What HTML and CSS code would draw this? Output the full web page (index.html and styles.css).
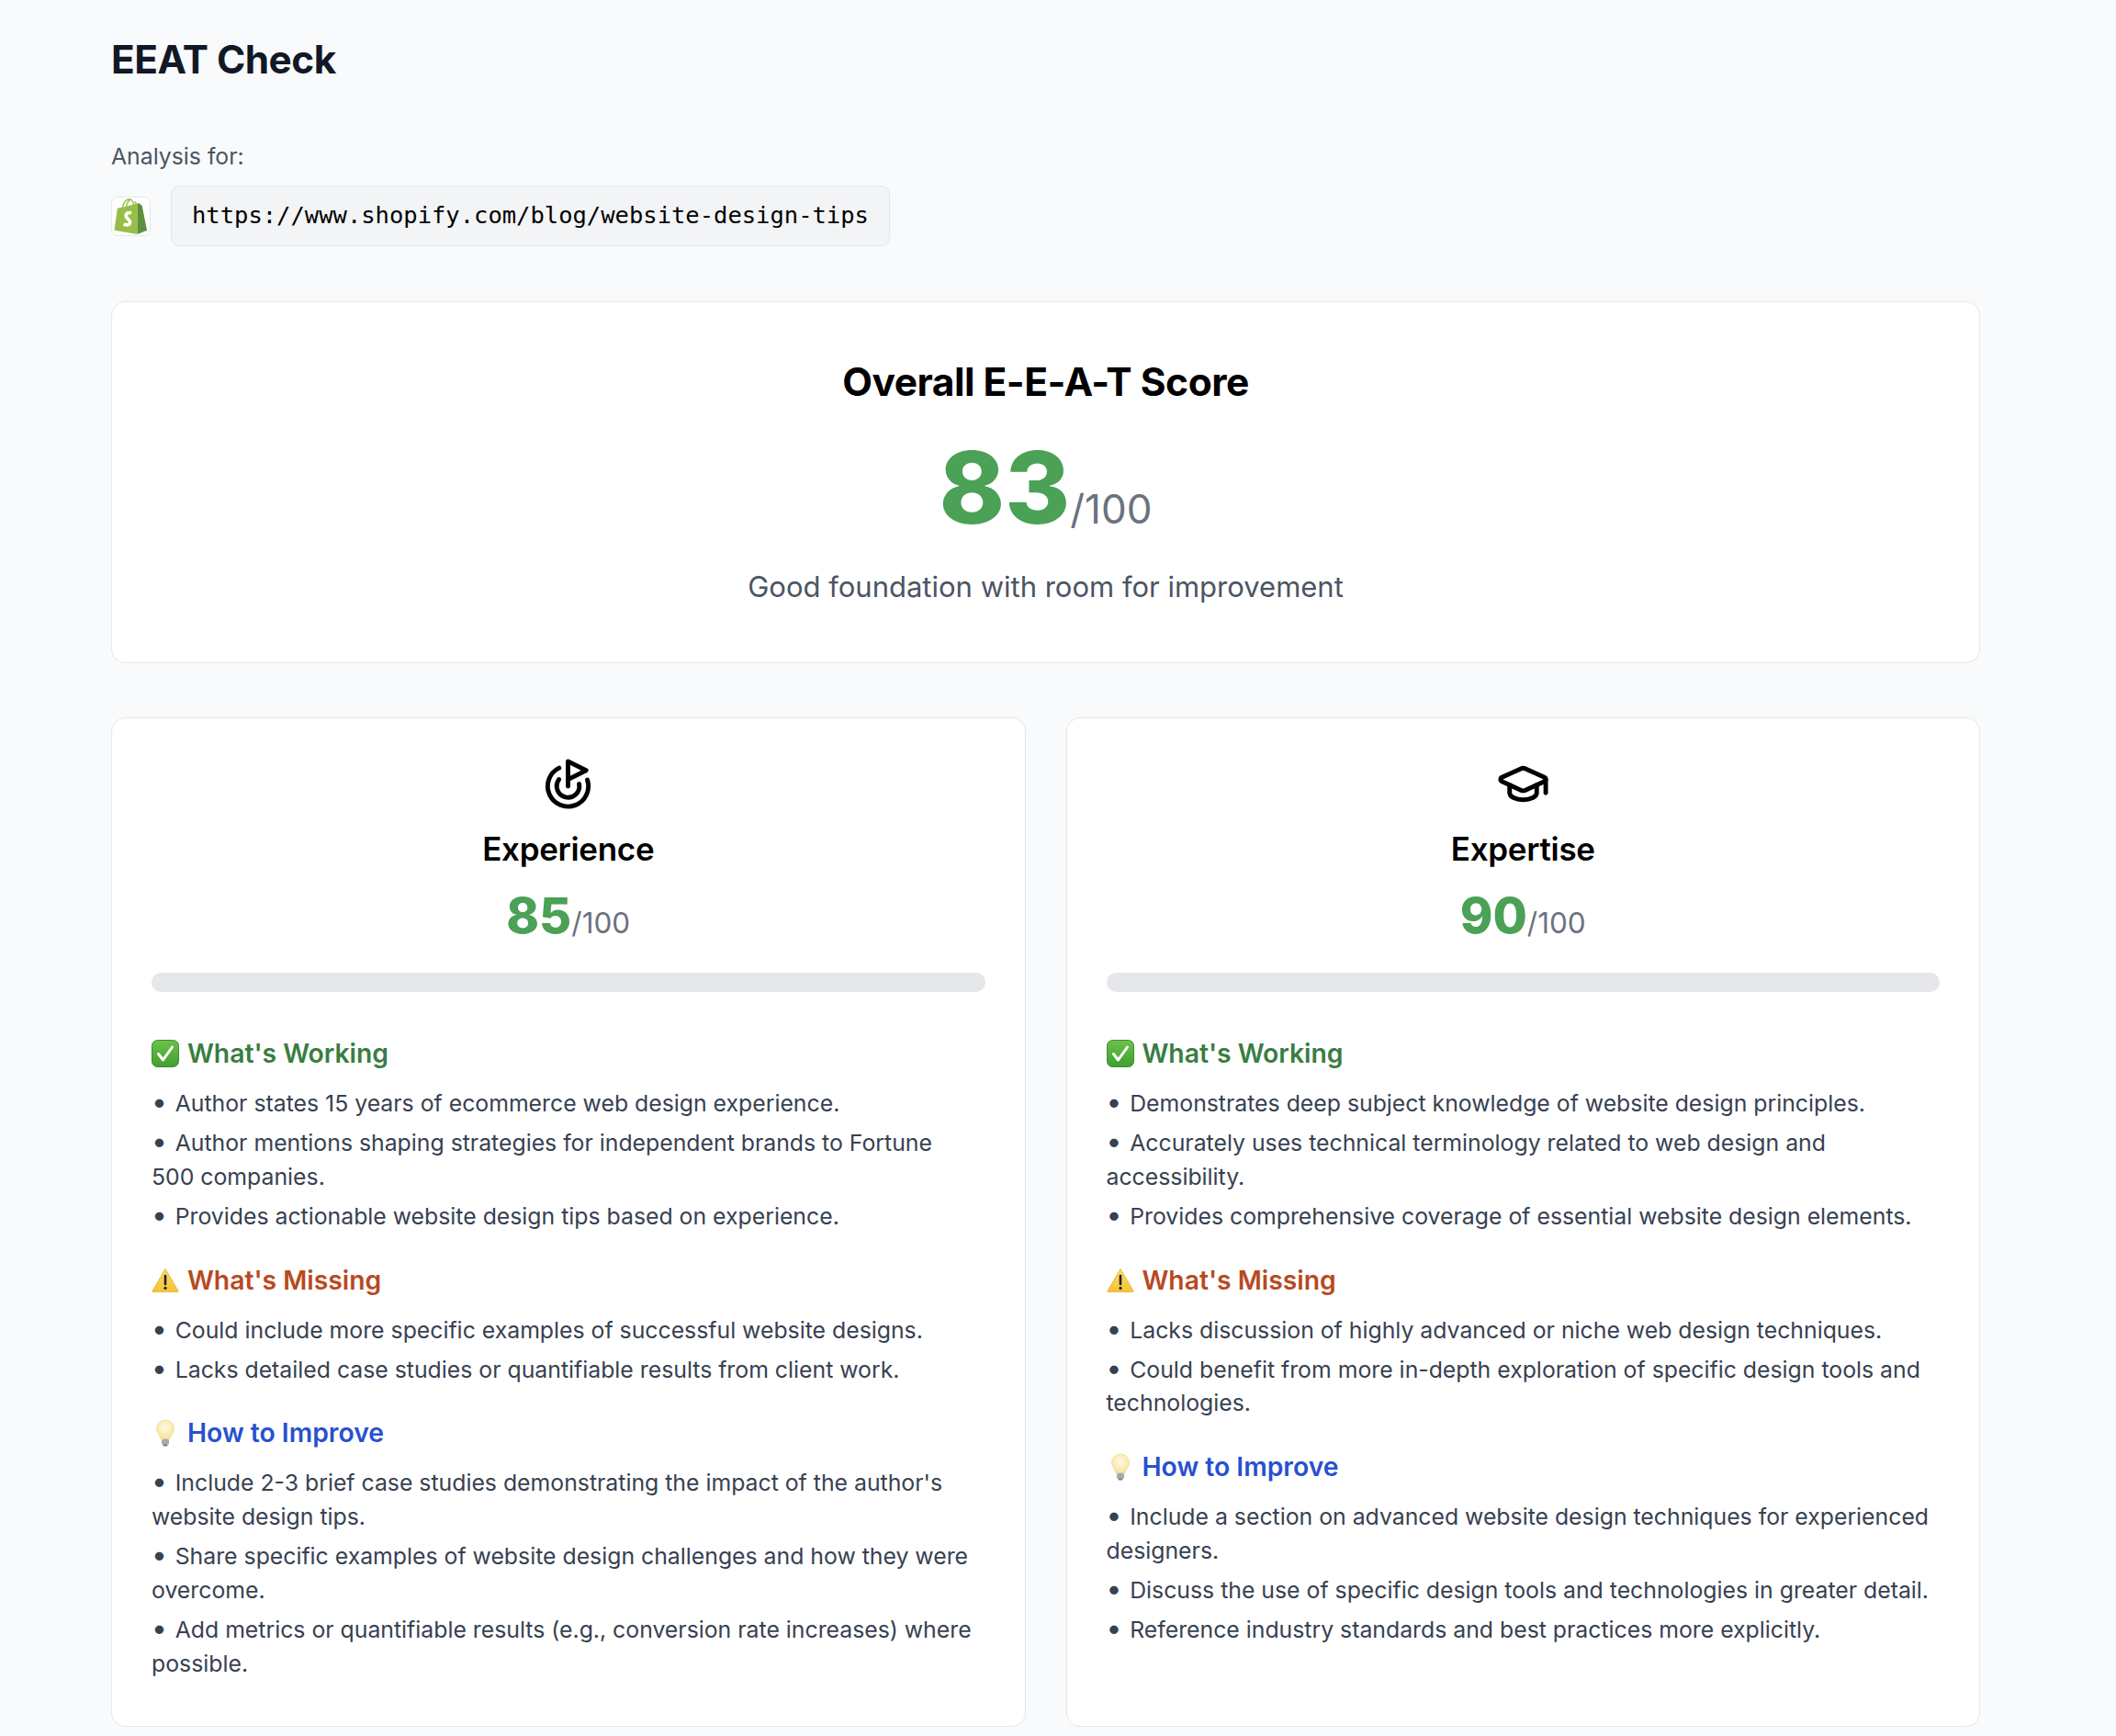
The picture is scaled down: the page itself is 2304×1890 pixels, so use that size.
FILE: index.html
```html
<!DOCTYPE html>
<html lang="en">
<head>
<meta charset="utf-8">
<title>EEAT Check</title>
<link rel="stylesheet" href="styles.css">
</head>
<body>
<svg class="defs" width="0" height="0" aria-hidden="true">
  <defs>
    <linearGradient id="gCheck" x1="0" y1="0" x2="0" y2="1"><stop offset="0" stop-color="#6cc24a"/><stop offset="1" stop-color="#3f9f2f"/></linearGradient>
    <linearGradient id="gWarn" x1="0" y1="0" x2="0" y2="1"><stop offset="0" stop-color="#f9dc6b"/><stop offset="1" stop-color="#f6c238"/></linearGradient>
    <radialGradient id="gBulb" cx="0.5" cy="0.4" r="0.6"><stop offset="0" stop-color="#fffbe0"/><stop offset="1" stop-color="#f8e3a0"/></radialGradient>
    <symbol id="e-check" viewBox="0 0 30 30">
      <rect x="0.5" y="0.5" width="29" height="29" rx="6" fill="url(#gCheck)" stroke="#3c8f2e"/>
      <path d="M7.5 15.5l5 6.5 10-14" fill="none" stroke="#fff" stroke-width="3" stroke-linecap="round" stroke-linejoin="round"/>
    </symbol>
    <symbol id="e-warn" viewBox="0 0 30 30">
      <path d="M15 2.5L29 26.5a.6.6 0 0 1-.5.9H1.5a.6.6 0 0 1-.5-.9z" fill="url(#gWarn)" stroke="#eeb92f" stroke-linejoin="round"/>
      <path d="M15 10v9" stroke="#222" stroke-width="2.6" stroke-linecap="round"/>
      <circle cx="15" cy="23.4" r="1.6" fill="#222"/>
    </symbol>
    <symbol id="e-bulb" viewBox="0 0 30 30">
      <path d="M15 1a9.5 9.5 0 0 0-9.5 9.5c0 3.6 2.3 5.6 3.6 8 .5 1 .6 2 .6 3h10.6c0-1 .1-2 .6-3 1.3-2.4 3.6-4.4 3.6-8A9.500 9.500 0 0 0 15 1z" fill="url(#gBulb)" stroke="#f0d890" stroke-width=".8"/>
      <rect x="11" y="21.800" width="8" height="6" rx="1.500" fill="#a9a9a9"/>
      <rect x="12.500" y="27.500" width="5" height="2" rx="1" fill="#777"/>
    </symbol>
  </defs>
</svg>
<main class="page">
  <h1 class="page-title">EEAT Check</h1>
  <p class="analysis-label">Analysis for:</p>
  <div class="url-row">
    <span class="favicon">
      <svg viewBox="0 0 42 42" width="41" height="41">
        <path d="M6 12L2.500 36.500 28.500 41 28.500 6.500 24 8z" fill="#95bf47"/>
        <path d="M28.500 6.500L31 7 33.500 9.500 39 36.500 28.500 41z" fill="#5e8e3e"/>
        <path d="M12 11c.5-5 3.500-9 7-9 3.500 0 5 3.500 5 6.500M16 10c.5-3.500 2-6 4-7M25 4.500c1.500.8 2 2.500 2.200 4" fill="none" stroke="#95bf47" stroke-width="1.500"/>
        <path d="M21.500 17.500c-1.500-.8-5.500-1-6 2.500-.5 3.500 5 4.500 4.500 8-.4 3-3.500 3.200-7 1.500" fill="none" stroke="#fff" stroke-width="3.800"/>
      </svg>
    </span>
    <code class="url-box">https://www.shopify.com/blog/website-design-tips</code>
  </div>

  <section class="card hero">
    <h2 class="hero-title">Overall E-E-A-T Score</h2>
    <div class="hero-score"><span class="hero-num">83</span><span class="hero-max">/100</span></div>
    <p class="hero-sub">Good foundation with room for improvement</p>
  </section>

  <div class="columns">
    <article class="card pillar">
      <svg class="pillar-icon" viewBox="0 0 24 24"><path d="M12 13V2l8 4-8 4"/><path d="M20.561 10.222a9 9 0 1 1-12.55-5.29"/><path d="M8.002 9.997a5 5 0 1 0 8.9 2.02"/></svg>
      <h3 class="pillar-title">Experience</h3>
      <div class="pillar-score"><span class="pillar-num">85</span><span class="pillar-max">/100</span></div>
      <div class="bar"></div>
      <h4 class="sec good"><svg class="emoji"><use href="#e-check"/></svg>What's Working</h4>
      <ul class="items">
        <li>Author states 15 years of ecommerce web design experience.</li>
        <li>Author mentions shaping strategies for independent brands to Fortune 500&nbsp;companies.</li>
        <li>Provides actionable website design tips based on experience.</li>
      </ul>
      <h4 class="sec warn"><svg class="emoji"><use href="#e-warn"/></svg>What's Missing</h4>
      <ul class="items">
        <li>Could include more specific examples of successful website designs.</li>
        <li>Lacks detailed case studies or quantifiable results from client work.</li>
      </ul>
      <h4 class="sec tip"><svg class="emoji"><use href="#e-bulb"/></svg>How to Improve</h4>
      <ul class="items">
        <li>Include 2-3 brief case studies demonstrating the impact of the author's website design tips.</li>
        <li>Share specific examples of website design challenges and how they were overcome.</li>
        <li>Add metrics or quantifiable results (e.g., conversion rate increases) where possible.</li>
      </ul>
    </article>
    <article class="card pillar">
      <svg class="pillar-icon" viewBox="0 0 24 24"><path d="M21.42 10.922a1 1 0 0 0-.019-1.838L12.83 5.18a2 2 0 0 0-1.66 0L2.6 9.08a1 1 0 0 0 0 1.832l8.57 3.908a2 2 0 0 0 1.66 0z"/><path d="M22 10v6"/><path d="M6 12.5V16a6 3 0 0 0 12 0v-3.5"/></svg>
      <h3 class="pillar-title">Expertise</h3>
      <div class="pillar-score"><span class="pillar-num">90</span><span class="pillar-max">/100</span></div>
      <div class="bar"></div>
      <h4 class="sec good"><svg class="emoji"><use href="#e-check"/></svg>What's Working</h4>
      <ul class="items">
        <li>Demonstrates deep subject knowledge of website design principles.</li>
        <li>Accurately uses technical terminology related to web design and accessibility.</li>
        <li>Provides comprehensive coverage of essential website design elements.</li>
      </ul>
      <h4 class="sec warn"><svg class="emoji"><use href="#e-warn"/></svg>What's Missing</h4>
      <ul class="items">
        <li>Lacks discussion of highly advanced or niche web design techniques.</li>
        <li>Could benefit from more in-depth exploration of specific design tools and technologies.</li>
      </ul>
      <h4 class="sec tip"><svg class="emoji"><use href="#e-bulb"/></svg>How to Improve</h4>
      <ul class="items">
        <li>Include a section on advanced website design techniques for experienced designers.</li>
        <li>Discuss the use of specific design tools and technologies in greater detail.</li>
        <li>Reference industry standards and best practices more explicitly.</li>
      </ul>
    </article>
  </div>
</main>
</body>
</html>
```

FILE: styles.css
```css
* { box-sizing: border-box; }
html, body { margin: 0; padding: 0; }
body {
  background: #f9fafb;
  font-family: Inter, "Liberation Sans", sans-serif;
  color: #374151;
  height: 1890px;
  overflow: hidden;
}
.defs { position: absolute; }
.page { padding: 41px 148px 0 121px; }
.page-title {
  margin: 0;
  font-size: 42.3px;
  line-height: 48px;
  font-weight: 700;
  color: #111827;
  letter-spacing: -0.5px;
}
.analysis-label {
  margin: 64px 0 0;
  font-size: 24.8px;
  line-height: 35px;
  color: #4b5563;
}
.url-row {
  display: flex;
  align-items: center;
  gap: 22px;
  margin-top: 14px;
}
.favicon {
  width: 43px;
  height: 43px;
  flex: none;
  display: flex;
  align-items: center;
  justify-content: center;
  background: #fff;
  border: 1px solid #e5e7eb;
  border-radius: 7px;
}
.url-box {
  display: block;
  height: 66px;
  padding: 0 22px;
  line-height: 63px;
  font-family: "DejaVu Sans Mono", monospace;
  font-size: 25.5px;
  color: #000;
  background: #f3f4f6;
  border: 1px solid #e5e7eb;
  border-radius: 9px;
}
.card {
  background: #fff;
  border: 1px solid #e5e7eb;
  border-radius: 15px;
}
.hero {
  height: 394px;
  margin-top: 60px;
  padding-top: 58px;
  text-align: center;
}
.hero-title {
  margin: 0;
  font-size: 42.5px;
  line-height: 58px;
  font-weight: 700;
  color: #000;
  letter-spacing: -0.5px;
}
.hero-score { margin-top: 26px; line-height: 120px; height: 120px; }
.hero-num { font-size: 108px; font-weight: 800; color: #4ba155; }
.hero-max { font-size: 44px; color: #6b7280; }
.hero-sub {
  margin: 26px 0 0;
  font-size: 31px;
  line-height: 44px;
  color: #4b5563;
}
.columns {
  display: grid;
  grid-template-columns: 1fr 1fr;
  gap: 44px;
  margin-top: 59px;
}
.pillar { height: 1099px; padding: 42px 43px 0; }
.pillar-icon {
  display: block;
  width: 59px;
  height: 59px;
  margin: 0 auto;
  fill: none;
  stroke: #000;
  stroke-width: 2;
  stroke-linecap: round;
  stroke-linejoin: round;
}
.pillar-title {
  margin: 18px 0 0;
  font-size: 35px;
  line-height: 47px;
  font-weight: 600;
  color: #000;
  text-align: center;
  letter-spacing: -0.3px;
}
.pillar-score { margin-top: 14px; height: 70px; line-height: 70px; text-align: center; }
.pillar-num { font-size: 54px; font-weight: 800; color: #4ba155; }
.pillar-max { font-size: 31.5px; color: #6b7280; }
.bar {
  height: 21px;
  margin-top: 27px;
  background: #e5e7eb;
  border-radius: 10.5px;
}
.sec {
  display: flex;
  align-items: center;
  gap: 9px;
  margin: 0;
  font-size: 28.3px;
  line-height: 44px;
  font-weight: 600;
}
.bar + .sec { margin-top: 45px; }
.emoji { width: 30px; height: 30px; flex: none; }
.good { color: #397d42; }
.warn { color: #b84a1e; }
.tip { color: #2850d0; }
.items {
  list-style: none;
  margin: 14px 0 29px;
  padding: 0;
  font-size: 24.8px;
  line-height: 36.7px;
}
.items li + li { margin-top: 6.4px; }
.items li::before {
  content: "•";
  display: inline-block;
  width: 25.7px;
  font-size: 30px;
  line-height: 0;
  color: #374151;
}
```
